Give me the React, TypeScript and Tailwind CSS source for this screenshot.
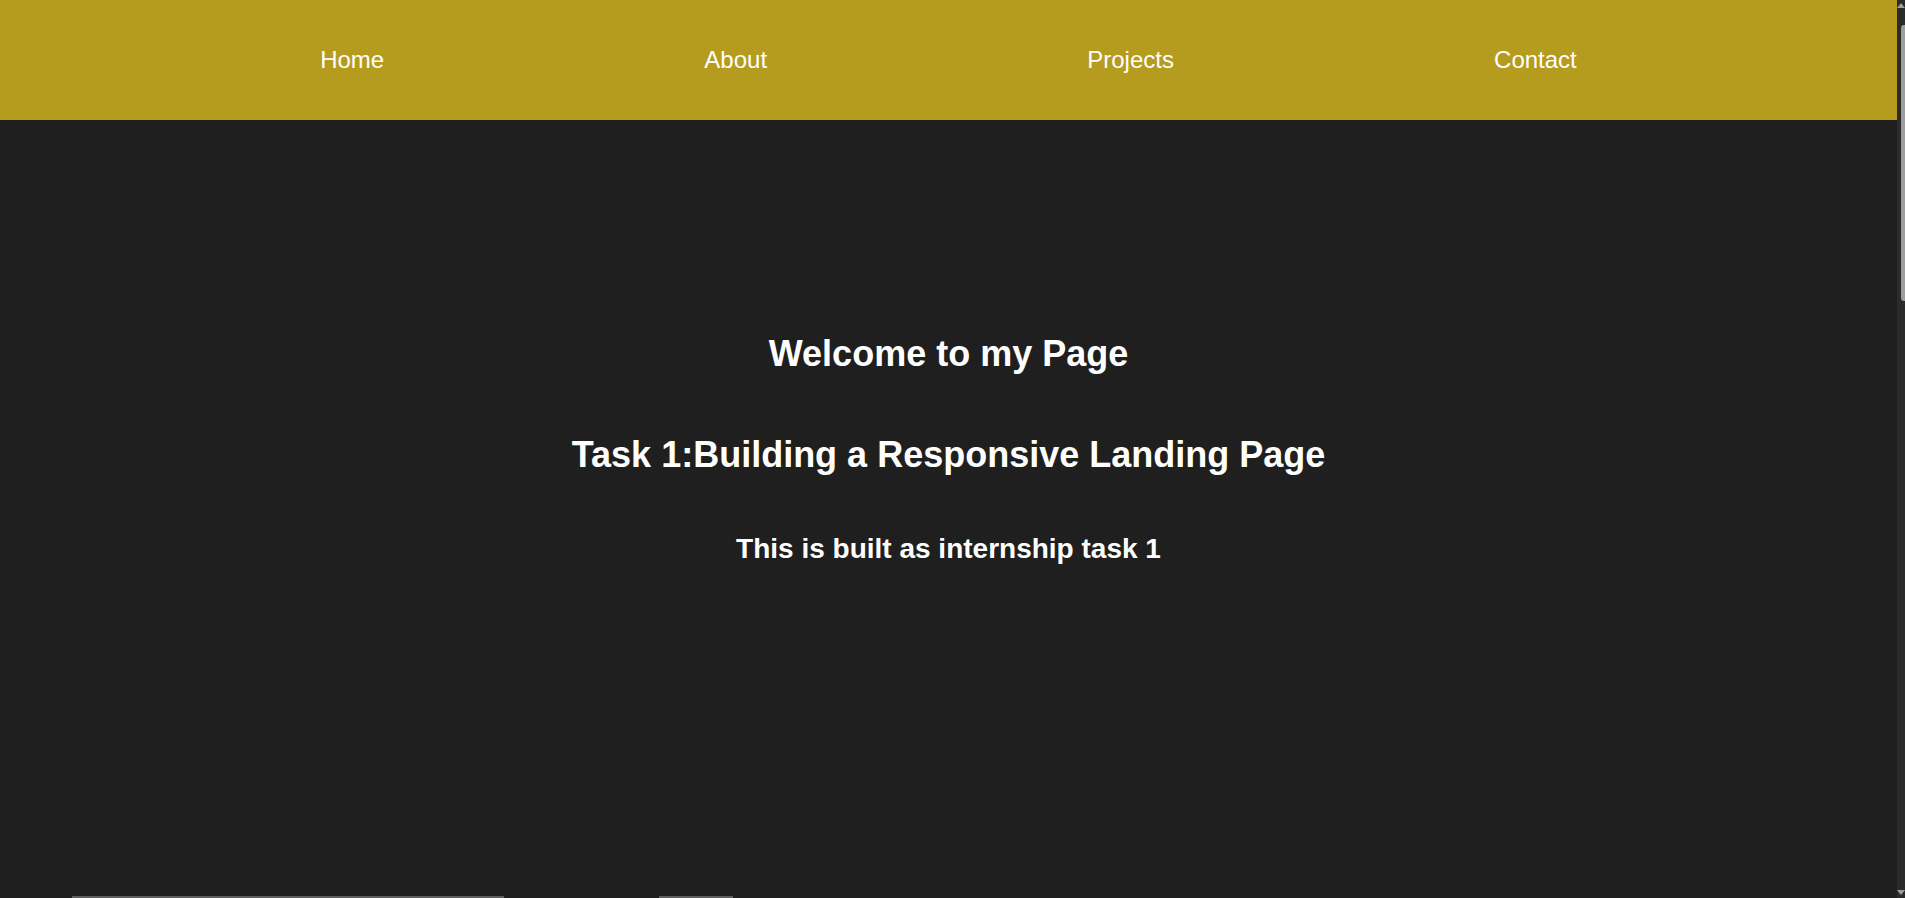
const links = ["Home", "About", "Projects", "Contact"];

export default function App() {
  return (
    <div className="flex h-screen w-full overflow-hidden bg-[#1f1f1f] font-['Liberation_Sans',Arial,sans-serif] text-white">
      <div className="flex min-w-0 flex-1 flex-col">
        {/* Navbar */}
        <nav className="flex h-[120px] shrink-0 items-center justify-evenly bg-[#b59b1e]">
          {links.map((l) => (
            <a key={l} href="#" className="text-[24px] leading-[28px] text-white">
              {l}
            </a>
          ))}
        </nav>

        {/* Hero */}
        <section className="flex h-[776px] shrink-0 flex-col items-center pt-[213px] text-center">
          <h1 className="text-[36px] font-bold leading-[41px]">Welcome to my Page</h1>
          <h2 className="mt-[60px] text-[36px] font-bold leading-[41px]">
            Task 1:Building a Responsive Landing Page
          </h2>
          <h3 className="mt-[58px] text-[28px] font-bold leading-[32px]">
            This is built as internship task 1
          </h3>
        </section>

        {/* Next section peeking in */}
        <section className="flex shrink-0 pl-[72px]">
          <div className="h-[40px] w-[432px] bg-[#5f5f5f]" />
          <div className="ml-[155px] h-[40px] w-[74px] bg-[#5f5f5f]" />
        </section>
      </div>

      {/* Scrollbar */}
      <div className="flex w-[8px] shrink-0 flex-col bg-[#2b2b2b]">
        <div className="mt-[3px] h-0 w-0 self-end border-x-[4px] border-b-[5px] border-x-transparent border-b-[#9e9e9e]" />
        <div className="ml-[4px] mt-[17px] h-[276px] rounded-l-[3px] bg-[#9e9e9e]" />
        <div className="mt-auto mb-[3px] h-0 w-0 self-end border-x-[4px] border-t-[5px] border-x-transparent border-t-[#9e9e9e]" />
      </div>
    </div>
  );
}
